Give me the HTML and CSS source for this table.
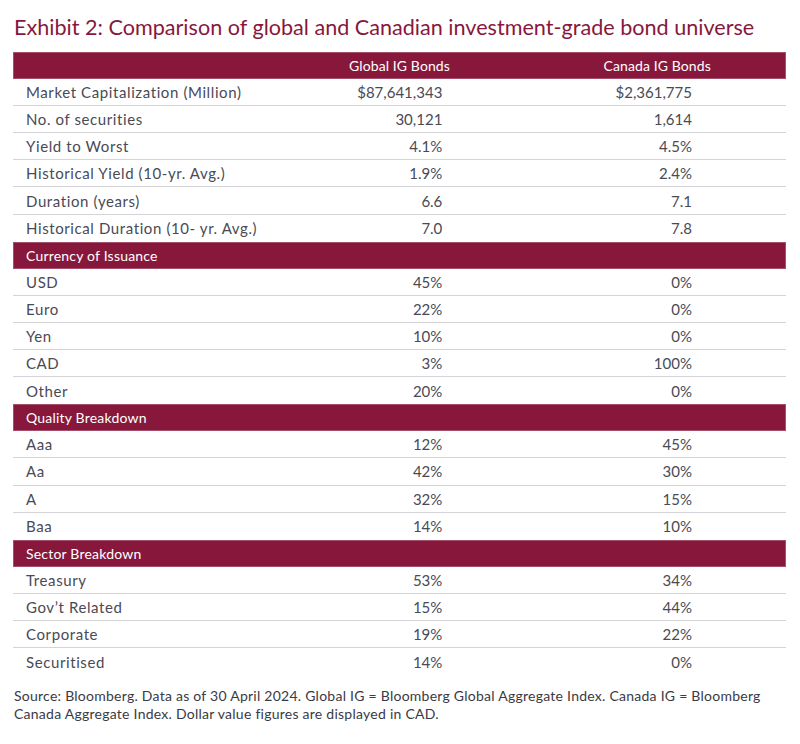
FILE: index.html
```html
<!DOCTYPE html>
<html>
<head>
<meta charset="utf-8">
<link rel="stylesheet" href="styles.css">
</head>
<body>
<h1 class="title">Exhibit 2: Comparison of global and Canadian investment-grade bond universe</h1>
<div class="table">
  <div class="row head"><div class="c lbl"></div><div class="c hc">Global IG Bonds</div><div class="c hc">Canada IG Bonds</div></div>
  <div class="row"><div class="c lbl">Market Capitalization (Million)</div><div class="c g">$87,641,343</div><div class="c k">$2,361,775</div></div>
  <div class="row"><div class="c lbl">No. of securities</div><div class="c g">30,121</div><div class="c k">1,614</div></div>
  <div class="row"><div class="c lbl">Yield to Worst</div><div class="c g">4.1%</div><div class="c k">4.5%</div></div>
  <div class="row"><div class="c lbl">Historical Yield (10-yr. Avg.)</div><div class="c g">1.9%</div><div class="c k">2.4%</div></div>
  <div class="row"><div class="c lbl">Duration (years)</div><div class="c g">6.6</div><div class="c k">7.1</div></div>
  <div class="row last"><div class="c lbl">Historical Duration (10- yr. Avg.)</div><div class="c g">7.0</div><div class="c k">7.8</div></div>
  <div class="row sec"><div class="c lbl">Currency of Issuance</div></div>
  <div class="row"><div class="c lbl">USD</div><div class="c g">45%</div><div class="c k">0%</div></div>
  <div class="row"><div class="c lbl">Euro</div><div class="c g">22%</div><div class="c k">0%</div></div>
  <div class="row"><div class="c lbl">Yen</div><div class="c g">10%</div><div class="c k">0%</div></div>
  <div class="row"><div class="c lbl">CAD</div><div class="c g">3%</div><div class="c k">100%</div></div>
  <div class="row last"><div class="c lbl">Other</div><div class="c g">20%</div><div class="c k">0%</div></div>
  <div class="row sec"><div class="c lbl">Quality Breakdown</div></div>
  <div class="row"><div class="c lbl">Aaa</div><div class="c g">12%</div><div class="c k">45%</div></div>
  <div class="row"><div class="c lbl">Aa</div><div class="c g">42%</div><div class="c k">30%</div></div>
  <div class="row"><div class="c lbl">A</div><div class="c g">32%</div><div class="c k">15%</div></div>
  <div class="row last"><div class="c lbl">Baa</div><div class="c g">14%</div><div class="c k">10%</div></div>
  <div class="row sec"><div class="c lbl">Sector Breakdown</div></div>
  <div class="row"><div class="c lbl">Treasury</div><div class="c g">53%</div><div class="c k">34%</div></div>
  <div class="row"><div class="c lbl">Gov’t Related</div><div class="c g">15%</div><div class="c k">44%</div></div>
  <div class="row"><div class="c lbl">Corporate</div><div class="c g">19%</div><div class="c k">22%</div></div>
  <div class="row last"><div class="c lbl">Securitised</div><div class="c g">14%</div><div class="c k">0%</div></div>
</div>
<p class="note">Source: Bloomberg. Data as of 30 April 2024. Global IG = Bloomberg Global Aggregate Index. Canada IG = Bloomberg Canada Aggregate Index. Dollar value figures are displayed in CAD.</p>
</body>
</html>
```
FILE: styles.css
```css
html, body { margin: 0; padding: 0; background: #fff; }
body { font-family: Lato, "Open Sans", sans-serif; color: #4a4a55; padding: 0 14px 0 13px; }
.title {
  margin: 0; padding-top: 14px; height: 52px; box-sizing: border-box; line-height: 26px;
  font-weight: 400; font-size: 21.6px; color: #87183c; padding-left: 1px; white-space: nowrap;
}
.table { width: 773px; }
.row {
  display: grid; grid-template-columns: 1fr 1fr 1fr;
  height: 27.1px; box-sizing: border-box; border-bottom: 1px solid #d4d4d8;
  font-size: 15px; align-items: center;
}
.row.last { border-bottom: none; }
.row.head, .row.sec { background: #87183c; color: #fff; border-bottom: none; font-size: 14px; box-shadow: inset 0 0 0 1px #a4506c; }
.row.sec { grid-template-columns: 1fr; }
.c { padding-left: 13px; white-space: nowrap; }
.lbl { letter-spacing: 0.6px; }
.sec .lbl { letter-spacing: 0.2px; }
.hc { text-align: center; padding-left: 0; letter-spacing: 0.1px; }
.g { text-align: right; padding-right: 86px; }
.k { text-align: right; padding-right: 94px; }
.note { margin: 12px 0 0 1px; font-size: 14px; letter-spacing: 0.25px; line-height: 18px; color: #3a3a44; width: 765px; }
```
